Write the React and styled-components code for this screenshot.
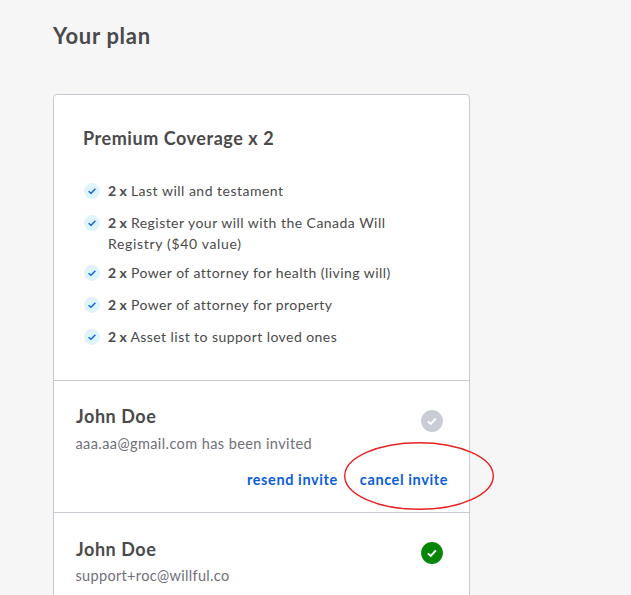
import React from "react";
import styled, { createGlobalStyle } from "styled-components";

const GlobalStyle = createGlobalStyle`
  * { box-sizing: border-box; }
  html, body { margin: 0; background: #f6f6f6; overflow: hidden; }
  body { font-family: Lato, "Open Sans", sans-serif; color: #4a4a4a; }
`;

const Page = styled.main`
  height: 595px;
  padding: 21px 0 0 53px;
  overflow: hidden;
`;

const PageTitle = styled.h1`
  margin: 0 0 43px;
  font-size: 22px;
  line-height: 30px;
  letter-spacing: 0.7px;
`;

const Card = styled.section`
  width: 417px;
  height: 560px;
  background: #fff;
  border: 1px solid #c9cad1;
  border-radius: 4px;
`;

const Coverage = styled.div`
  height: 285px;
  padding: 31px 29px 0;
`;

const CoverageTitle = styled.h2`
  margin: 0 0 30px;
  font-size: 18px;
  line-height: 24px;
  letter-spacing: 0.55px;
`;

const Features = styled.ul`
  display: flex;
  flex-direction: column;
  gap: 11px;
  margin: 0;
  padding: 0;
  list-style: none;
`;

const Feature = styled.li`
  display: flex;
  gap: 8px;
  font-size: 14px;
  line-height: 21px;
  height: ${({ $lines }) => ($lines === 2 ? 39 : 21)}px;
`;

const Bullet = styled.svg`
  flex: none;
  width: 16px;
  height: 16px;
  margin: 3px 0 0 1px;
`;

const FeatureLine = styled.span`
  display: block;
  white-space: nowrap;
  letter-spacing: ${({ $spacing }) => $spacing}px;
`;

const Quantity = styled.b`
  letter-spacing: 0;
`;

const Member = styled.div`
  height: ${({ $height }) => $height}px;
  padding: 24px 21px 0 22px;
  border-top: 1px solid #c9cad1;
`;

const MemberHeader = styled.div`
  display: flex;
  justify-content: space-between;
  height: 50px;
`;

const Name = styled.h3`
  margin: ${({ $raised }) => ($raised ? "-1px 0 2px" : "0")};
  font-size: 18px;
  line-height: 24px;
  letter-spacing: 0.55px;
`;

const Email = styled.p`
  margin: ${({ $offset = 5 }) => $offset}px 0 0 -0.5px;
  font-size: 14.5px;
  line-height: 20px;
  white-space: nowrap;
  letter-spacing: ${({ $spacing }) => $spacing}px;
  color: #6f7078;
`;

const Status = styled.svg`
  width: 22px;
  height: 22px;
  margin: 5px 5px 0 0;
`;

const Actions = styled.div`
  display: flex;
  justify-content: flex-end;
  gap: 22px;
  margin-top: 15px;
`;

const Action = styled.a`
  position: relative;
  font-size: 14.5px;
  font-weight: 700;
  line-height: 20px;
  letter-spacing: 0.6px;
  white-space: nowrap;
  color: #0b5ed7;
`;

const Highlight = styled.svg`
  position: absolute;
  left: -17px;
  top: -29px;
  width: 152px;
  height: 70px;
  pointer-events: none;
`;

const features = [
  { lines: ["Last will and testament"], spacing: [0.49] },
  { lines: ["Register your will with the Canada Will", "Registry ($40 value)"], spacing: [0.47, 0.67] },
  { lines: ["Power of attorney for health (living will)"], spacing: [0.45] },
  { lines: ["Power of attorney for property"], spacing: [0.45] },
  { lines: ["Asset list to support loved ones"], spacing: [0.44] },
];

function StatusIcon({ color }) {
  return (
    <Status viewBox="0 0 22 22">
      <circle cx="11" cy="11" r="10.9" fill={color} />
      <path d="M6.8 11.4 9.8 14 14.8 8.3" fill="none" stroke="#fff" strokeWidth="1.9" />
    </Status>
  );
}

export default function App() {
  return (
    <Page>
      <GlobalStyle />
      <PageTitle>Your plan</PageTitle>
      <Card>
        <Coverage>
          <CoverageTitle>Premium Coverage x 2</CoverageTitle>
          <Features>
            {features.map(({ lines, spacing }) => (
              <Feature key={lines[0]} $lines={lines.length}>
                <Bullet viewBox="0 0 16 16">
                  <circle cx="8" cy="8" r="7.9" fill="#def4ff" />
                  <path d="M4.6 8.2 7 10.2 11.4 5.8" fill="none" stroke="#0b62e0" strokeWidth="1.4" />
                </Bullet>
                <div>
                  {lines.map((line, i) => (
                    <FeatureLine key={line} $spacing={spacing[i]}>
                      {i === 0 && <><Quantity>2 x</Quantity>{" "}</>}
                      {line}
                    </FeatureLine>
                  ))}
                </div>
              </Feature>
            ))}
          </Features>
        </Coverage>
        <Member $height={132}>
          <MemberHeader>
            <div>
              <Name $raised>John Doe</Name>
              <Email $offset={6} $spacing={0.41}>aaa.aa@gmail.com has been invited</Email>
            </div>
            <StatusIcon color="#c9ccd4" />
          </MemberHeader>
          <Actions>
            <Action>resend invite</Action>
            <Action>
              cancel invite
              <Highlight viewBox="0 0 152 70">
                <ellipse cx="76" cy="35" rx="74.3" ry="33.3" fill="none" stroke="#e8201f" strokeWidth="1.4" />
              </Highlight>
            </Action>
          </Actions>
        </Member>
        <Member $height={140}>
          <MemberHeader>
            <div>
              <Name>John Doe</Name>
              <Email $spacing={0.33}>support+roc@willful.co</Email>
            </div>
            <StatusIcon color="#068506" />
          </MemberHeader>
        </Member>
      </Card>
    </Page>
  );
}
